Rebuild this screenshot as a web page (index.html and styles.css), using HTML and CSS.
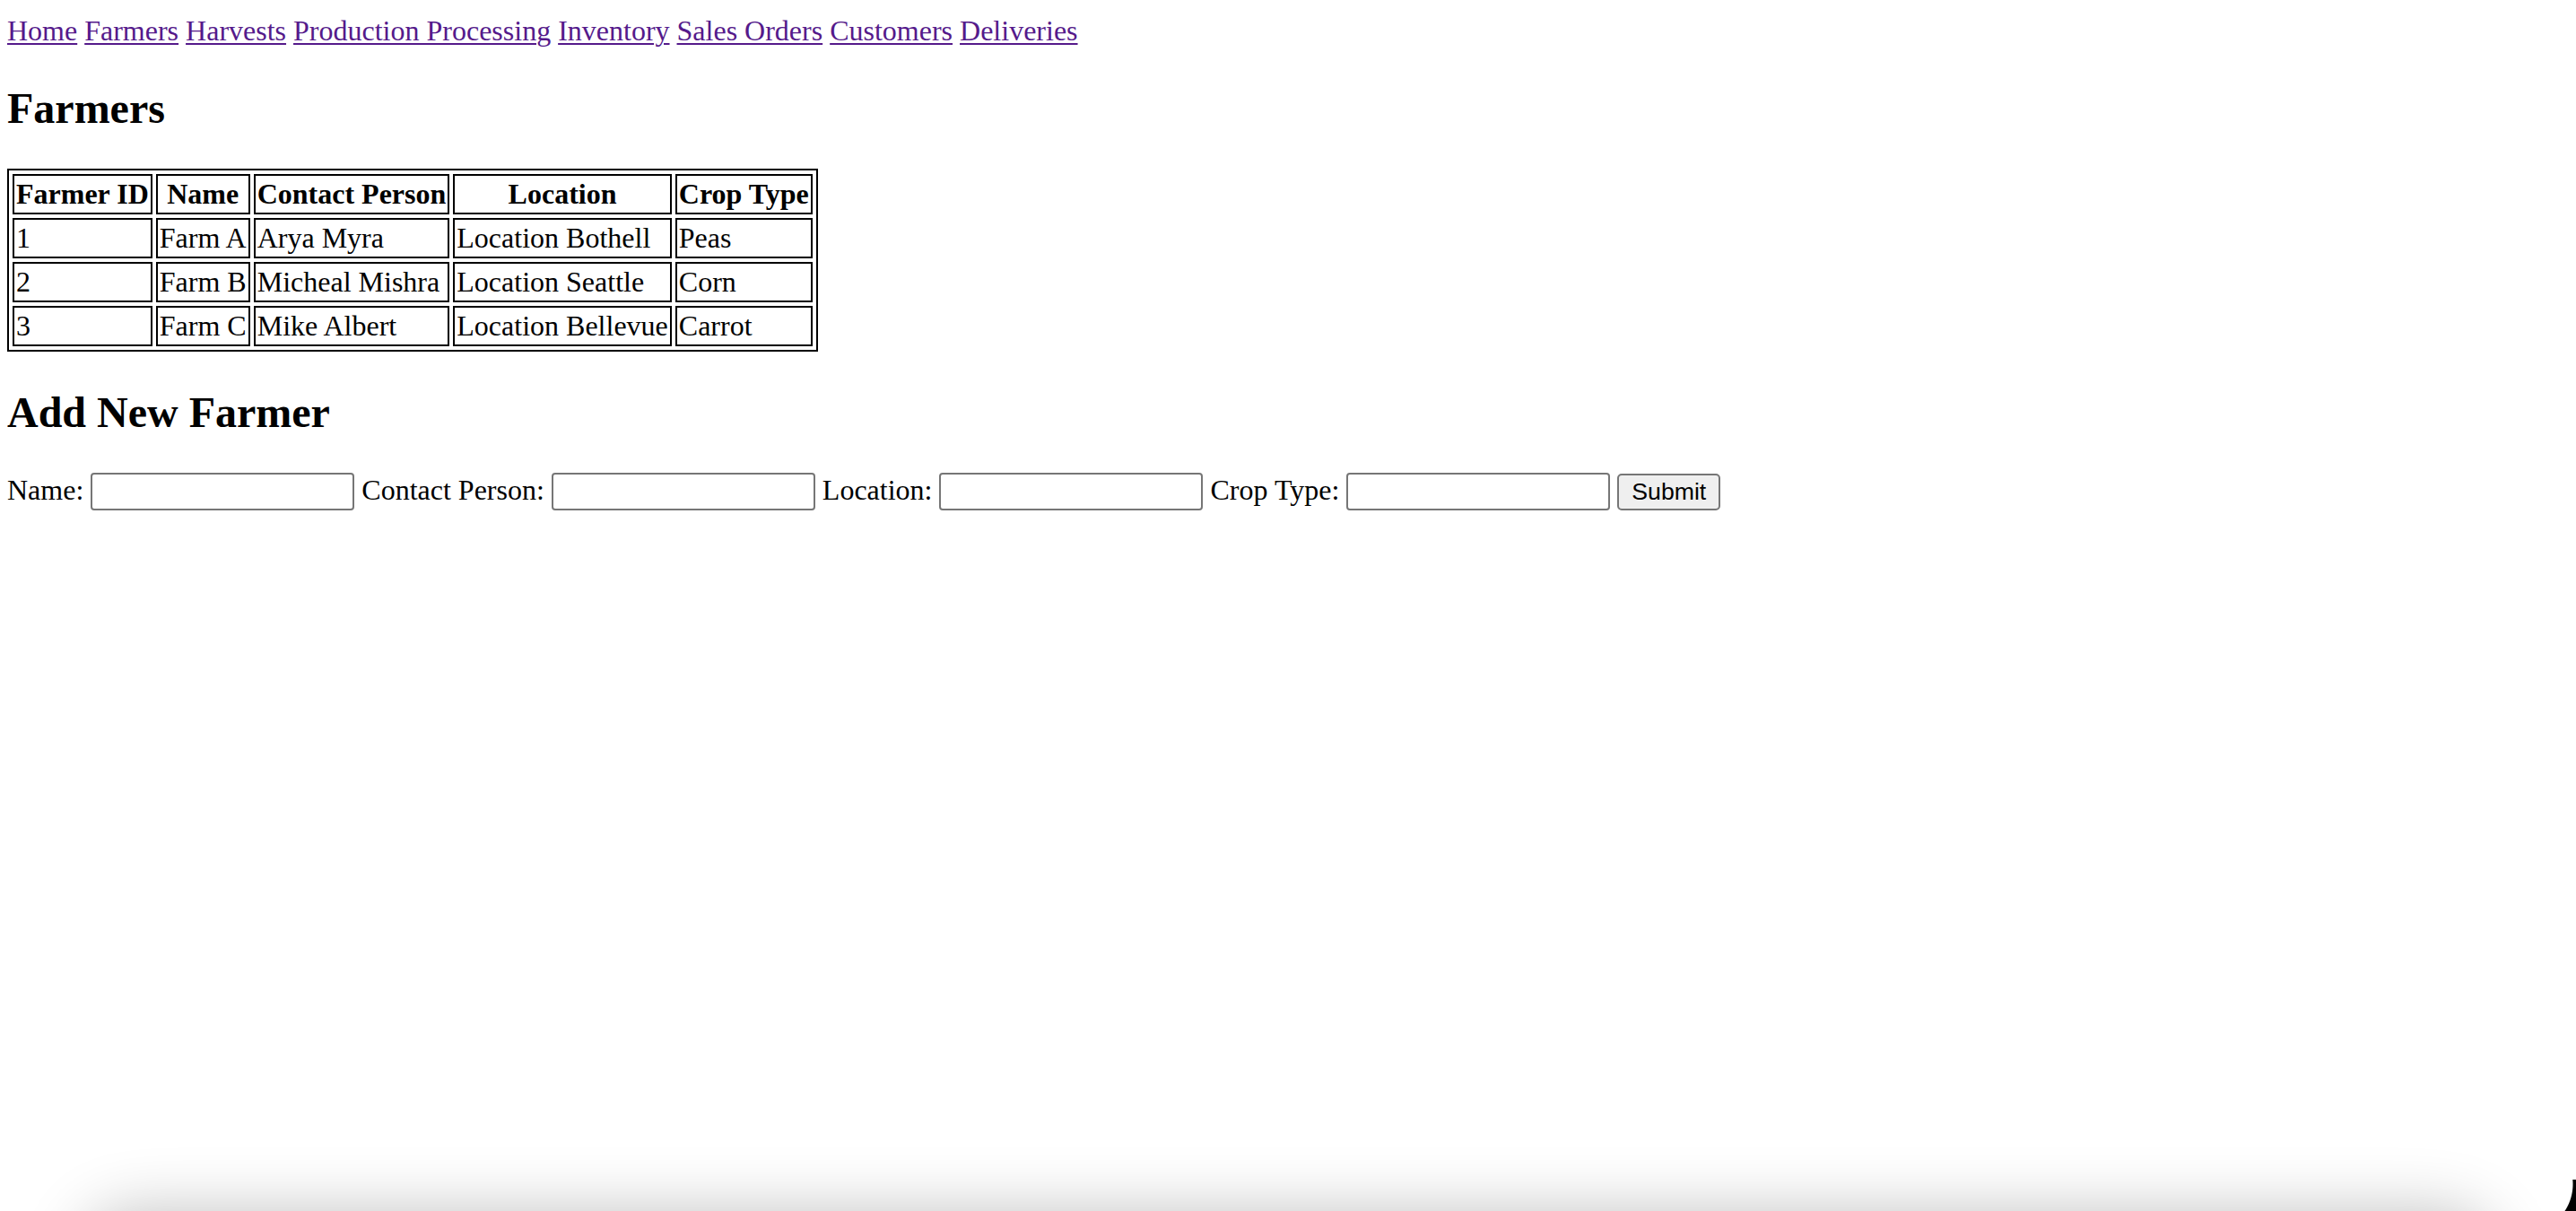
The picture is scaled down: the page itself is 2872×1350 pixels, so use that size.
FILE: index.html
```html
<!DOCTYPE html>
<html lang="en">
<head>
<meta charset="utf-8">
<title>Farmers</title>
<link rel="stylesheet" href="styles.css">
</head>
<body class="page">
<nav class="nav">
<a class="nav-link" href="#">Home</a>
<a class="nav-link" href="#">Farmers</a>
<a class="nav-link" href="#">Harvests</a>
<a class="nav-link" href="#">Production Processing</a>
<a class="nav-link" href="#">Inventory</a>
<a class="nav-link" href="#">Sales Orders</a>
<a class="nav-link" href="#">Customers</a>
<a class="nav-link" href="#">Deliveries</a>
</nav>
<h2 class="heading">Farmers</h2>
<table class="data-table">
<thead>
<tr><th class="cell head">Farmer ID</th><th class="cell head">Name</th><th class="cell head">Contact Person</th><th class="cell head">Location</th><th class="cell head">Crop Type</th></tr>
</thead>
<tbody>
<tr><td class="cell">1</td><td class="cell">Farm A</td><td class="cell">Arya Myra</td><td class="cell">Location Bothell</td><td class="cell">Peas</td></tr>
<tr><td class="cell">2</td><td class="cell">Farm B</td><td class="cell">Micheal Mishra</td><td class="cell">Location Seattle</td><td class="cell">Corn</td></tr>
<tr><td class="cell">3</td><td class="cell">Farm C</td><td class="cell">Mike Albert</td><td class="cell">Location Bellevue</td><td class="cell">Carrot</td></tr>
</tbody>
</table>
<h2 class="heading">Add New Farmer</h2>
<form class="form">
<label class="label" for="name">Name:</label> <input class="field" type="text" id="name">
<label class="label" for="contact">Contact Person:</label> <input class="field" type="text" id="contact">
<label class="label" for="location">Location:</label> <input class="field" type="text" id="location">
<label class="label" for="crop">Crop Type:</label> <input class="field" type="text" id="crop">
<button class="submit" type="button">Submit</button>
</form>
<div class="window-shadow"></div>
<div class="window-corner"></div>
</body>
</html>
```
FILE: styles.css
```css
html {
  background: #fff;
}

.page {
  margin: 16px 8px;
  font-family: "Liberation Serif", "Times New Roman", serif;
  font-size: 32px;
  color: #000;
  background: #fff;
}

.nav-link {
  color: #551a8b;
  text-decoration: underline;
  text-decoration-thickness: 2px;
  text-underline-offset: 3px;
}

.heading {
  font-size: 48px;
  font-weight: bold;
  margin: 40px 0;
}

.data-table {
  border: 2px solid #000;
  border-spacing: 4px;
  border-collapse: separate;
}

.cell {
  border: 2px solid #000;
  padding: 2px;
  font-size: 32px;
  vertical-align: middle;
  text-align: left;
}

.head {
  font-weight: bold;
  text-align: center;
}

.form {
  margin: 0;
}

.field {
  box-sizing: border-box;
  width: 294px;
  height: 42px;
  border: 2px solid #767676;
  border-radius: 4px;
  padding: 2px 4px;
  font-family: "Liberation Sans", Arial, sans-serif;
  font-size: 26.67px;
  background: #fff;
  vertical-align: baseline;
  margin: 0;
}

.submit {
  box-sizing: border-box;
  height: 41px;
  padding: 2px 14px;
  border: 2px solid #767676;
  border-radius: 5px;
  background: #efefef;
  font-family: "Liberation Sans", Arial, sans-serif;
  font-size: 26.67px;
  color: #000;
  margin: 0;
}

.window-shadow {
  position: fixed;
  left: 90px;
  right: 90px;
  top: 1350px;
  height: 200px;
  border-radius: 60px;
  background: #ccc;
  box-shadow: 0 0 70px 0 rgba(0, 0, 0, 0.24);
}

.window-corner {
  position: fixed;
  right: 0;
  bottom: 0;
  width: 22px;
  height: 35px;
  background: radial-gradient(circle 56px at -36px 5px, transparent 54px, #000 55px);
}
```
